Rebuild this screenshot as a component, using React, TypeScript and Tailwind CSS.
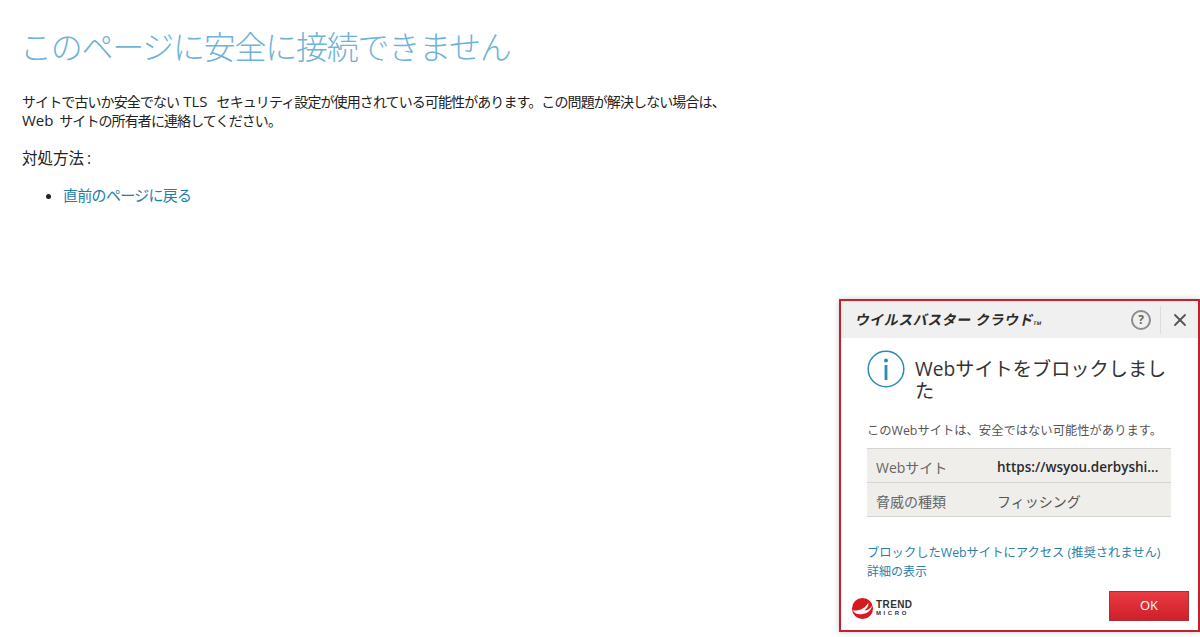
import { X } from "lucide-react";

const jp = "font-['Open_Sans','Noto_Sans_CJK_JP',sans-serif]";

function TrendLogo() {
  return (
    <div className="mt-[4px] flex items-center gap-[2px]">
      <svg width="23" height="23" viewBox="0 0 24 24">
        <circle cx="12" cy="12" r="11" fill="#d71920" />
        <path d="M2 14 C8 15 15 12 18 6 C19 10 16 12 14 14 C17 14 20 12 22 9 C21 15 15 18 9 18 C6 18 3 16 2 14Z" fill="#fff" />
      </svg>
      <div className="flex flex-col font-['Liberation_Sans',sans-serif] text-[#333]">
        <span className="text-[10px] leading-[11px] font-bold tracking-[0.4px]">TREND</span>
        <span className="text-[6px] leading-[7px] font-bold tracking-[2.6px]">MICRO</span>
      </div>
    </div>
  );
}

function Popup() {
  return (
    <div className={`absolute left-[839px] top-[299px] flex h-[333px] w-[361px] flex-col border-2 border-[#c4202e] bg-white shadow-[0_0_6px_rgba(0,0,0,0.2)] ${jp}`}>
      {/* title bar */}
      <div className="flex h-[37px] shrink-0 items-center bg-[#f0f0f0] pl-[15px]">
        <span className="flex-1 origin-left -skew-x-12 text-[14px] font-bold tracking-[0.5px] text-[#2b2b2b]">
          ウイルスバスター クラウド<span className="text-[5px]">TM</span>
        </span>
        <div className="flex h-[20px] w-[20px] items-center justify-center rounded-full border-2 border-[#8c8c8c] text-[12px] font-bold leading-none text-[#666]">
          ?
        </div>
        <div className="ml-[9px] h-[28px] w-px bg-[#dcdcdc]" />
        <div className="flex w-[37px] justify-center">
          <X size={20} strokeWidth={2.2} className="text-[#555]" />
        </div>
      </div>

      <div className="flex flex-1 flex-col px-[26px]">
        <div className="mt-[12px] flex items-start">
          <svg width="38" height="38" viewBox="0 0 38 38" className="shrink-0">
            <circle cx="19" cy="19" r="17.8" fill="none" stroke="#2a8bb3" strokeWidth="1.5" />
            <circle cx="19" cy="10.5" r="2" fill="#2a8bb3" />
            <rect x="17.6" y="15" width="2.8" height="15" fill="#2a8bb3" />
          </svg>
          <h2 className="ml-[10px] mt-[8px] w-[254px] text-[19.2px] font-normal leading-[22px] text-[#333]">
            Webサイトをブロックしました
          </h2>
        </div>

        <p className="mt-[21px] whitespace-nowrap text-[12.3px] leading-[16px] text-[#555]">
          このWebサイトは、安全ではない可能性があります。
        </p>

        <div className="mt-[9px] w-[304px] border-y border-[#d5d5d5] bg-[#efeeeb] text-[14px]">
          <div className="flex h-[34px] items-center border-b border-[#d5d5d5] px-[9px] pt-[3px]">
            <span className="w-[121px] text-[#666]">Webサイト</span>
            <span className="text-[13.5px] font-semibold text-[#2b2b2b]">https://wsyou.derbyshi...</span>
          </div>
          <div className="flex h-[33px] items-center px-[9px] pt-[3px]">
            <span className="w-[121px] text-[#666]">脅威の種類</span>
            <span className="text-[#555]">フィッシング</span>
          </div>
        </div>

        <a className="mt-[26px] whitespace-nowrap text-[12.3px] leading-[19px] text-[#2a7fa8]">
          ブロックしたWebサイトにアクセス (推奨されません)
        </a>
        <a className="text-[12px] leading-[19px] text-[#2a7fa8]">詳細の表示</a>
      </div>

      <div className="flex items-center justify-between pb-[9px] pl-[10px] pr-[9px]">
        <TrendLogo />
        <button className="h-[30px] w-[80px] border border-[#a83038] bg-gradient-to-b from-[#ea3a44] to-[#cf1f2a] text-[13px] text-white">
          OK
        </button>
      </div>
    </div>
  );
}

export default function App() {
  return (
    <div className={`relative h-[637px] w-[1200px] overflow-hidden bg-white pl-[22px] pt-[22px] ${jp}`}>
      <h1 className="-ml-[2px] text-[32px] font-light leading-[50px] tracking-[-1.25px] text-[#6fb3d9]">このページに安全に接続できません</h1>

      <p className="mt-[20px] text-[14px] leading-[19px] tracking-[-0.9px] text-[#222]">
        サイトで古いか安全でない<span className="ml-[4px] mr-[9px] text-[15px] tracking-normal">TLS</span>セキュリティ設定が使用されている可能性があります。この問題が解決しない場合は、
        <br />
        <span className="mr-[3px] text-[15px] tracking-normal">Web</span> サイトの所有者に連絡してください。
      </p>

      <p className="mt-[18px] text-[15.5px] leading-[20px] text-[#222]">
        対処方法<span className="ml-[3px]">:</span>
      </p>

      <ul className="mt-[17px] list-disc pl-[41px] text-[15px] leading-[20px] tracking-[-0.7px] text-[#222]">
        <li>
          <a className="text-[#1f7fad]">直前のページに戻る</a>
        </li>
      </ul>

      <Popup />
    </div>
  );
}
